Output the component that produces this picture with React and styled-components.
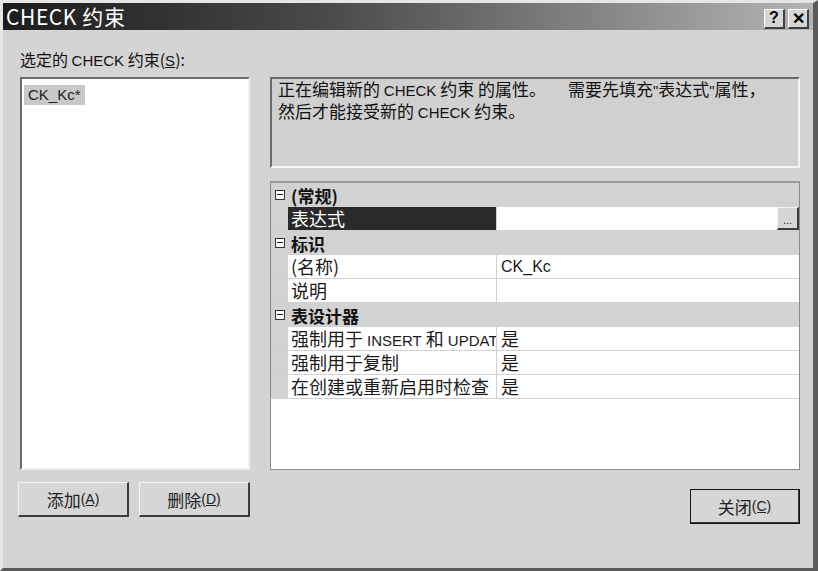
import React from "react";
import styled, { createGlobalStyle } from "styled-components";

const GlobalStyle = createGlobalStyle`
  html, body {
    margin: 0;
    padding: 0;
    background: #d4d4d4;
  }
  body {
    font-family: "Noto Sans CJK SC", "Liberation Sans", sans-serif;
  }
`;

// Outer dialog frame
const Dialog = styled.div`
  width: 818px;
  height: 571px;
  box-sizing: border-box;
  background: #d4d4d4;
  border-top: 3px solid #e6e6e6;
  border-left: 3px solid #e6e6e6;
  border-right: 5px solid #5a5a5a;
  border-bottom: 3px solid #5a5a5a;
  display: flex;
  flex-direction: column;
`;

const TitleBar = styled.div`
  height: 27px;
  background: linear-gradient(to right, #1c1c1c 0%, #4a4a4a 40%, #b4b4b4 100%);
  display: flex;
  align-items: center;
  justify-content: space-between;
  padding: 0 4px 0 3px;
`;

const Title = styled.div`
  color: #fff;
  font-size: 21px;
  line-height: 27px;
  letter-spacing: 0.6px;
`;

const CaptionButtons = styled.div`
  display: flex;
  gap: 3px;
  margin-top: 4px;
`;

const CaptionButton = styled.div`
  width: 21px;
  height: 20px;
  box-sizing: border-box;
  background: #d6d6d6;
  border-top: 1px solid #fff;
  border-left: 1px solid #fff;
  border-right: 2px solid #404040;
  border-bottom: 2px solid #404040;
  display: flex;
  align-items: center;
  justify-content: center;
  font-family: "Liberation Sans", sans-serif;
  font-weight: bold;
  font-size: 16px;
  color: #000;
`;

const Body = styled.div`
  flex: 1;
  padding: 18px 13px 0 17px;
  display: flex;
  flex-direction: column;
`;

const Label = styled.div`
  font-size: 16px;
  color: #111;
  height: 29px;
  line-height: 22px;
`;

const SmallCaps = styled.span`
  font-family: "Liberation Sans", sans-serif;
  font-size: ${p => p.size || 14}px;
`;

const Underline = styled.span`
  text-decoration: underline;
`;

const Columns = styled.div`
  display: flex;
  gap: 20px;
`;

const LeftCol = styled.div`
  width: 230px;
  display: flex;
  flex-direction: column;
`;

const RightCol = styled.div`
  flex: 1;
  display: flex;
  flex-direction: column;
`;

const ListBox = styled.div`
  height: 393px;
  box-sizing: border-box;
  background: #fff;
  border-top: 2px solid #6a6a6a;
  border-left: 2px solid #6a6a6a;
  border-right: 2px solid #f0f0f0;
  border-bottom: 2px solid #f0f0f0;
  padding: 2px 2px;
`;

const ListItem = styled.div`
  display: inline-block;
  background: ${p => (p.selected ? "#c8c8c8" : "transparent")};
  font-family: "Liberation Sans", sans-serif;
  font-size: 15px;
  color: #222;
  padding: 1px 4px 2px 4px;
`;

const ButtonRow = styled.div`
  display: flex;
  justify-content: space-between;
  margin-top: 12px;
  margin-left: -2px;
`;

const PushButton = styled.button`
  width: ${p => p.w || 111}px;
  height: 35px;
  box-sizing: border-box;
  background: #d6d6d6;
  border-top: 1px solid #f4f4f4;
  border-left: 1px solid #f4f4f4;
  border-right: 2px solid #3c3c3c;
  border-bottom: 2px solid #3c3c3c;
  outline: ${p => (p.isDefault ? "1px solid #111" : "none")};
  outline-offset: -1px;
  font-family: "Noto Sans CJK SC", "Liberation Sans", sans-serif;
  font-size: 17px;
  color: #222;
  padding: 0;
  display: flex;
  align-items: center;
  justify-content: center;
`;

const ShortcutKey = styled.span`
  font-family: "Liberation Sans", sans-serif;
  font-size: 14px;
  text-decoration: underline;
`;

const Description = styled.div`
  height: 91px;
  box-sizing: border-box;
  background: #d0d0d0;
  border-top: 2px solid #6a6a6a;
  border-left: 2px solid #6a6a6a;
  border-right: 2px solid #f4f4f4;
  border-bottom: 2px solid #f4f4f4;
  padding: 0 6px;
  font-size: 17px;
  line-height: 20px;
  color: #111;
`;

const Gap = styled.span`
  display: inline-block;
  width: ${p => p.w}px;
`;

const PropGrid = styled.div`
  margin-top: 13px;
  height: 289px;
  box-sizing: border-box;
  background: #fff;
  border: 1px solid #8a8a8a;
  border-top: 2px solid #9a9a9a;
  display: flex;
  flex-direction: column;
`;

const CategoryRow = styled.div`
  height: 24px;
  display: flex;
  align-items: center;
  background: #d2d2d2;
  font-weight: bold;
  font-size: 17px;
  color: #111;
`;

const Toggle = styled.div`
  width: 10px;
  height: 10px;
  box-sizing: border-box;
  border: 1px solid #333;
  margin: 0 6px 0 4px;
  position: relative;
  background: #fff;
  &::after {
    content: "";
    position: absolute;
    left: 1px;
    right: 1px;
    top: 3px;
    height: 1px;
    background: #222;
  }
`;

const PropRow = styled.div`
  height: 24px;
  display: flex;
  border-bottom: 1px solid #d0d0d0;
  box-sizing: border-box;
`;

const Gutter = styled.div`
  width: 17px;
  background: #d2d2d2;
  flex: none;
`;

const NameCell = styled.div`
  width: 209px;
  flex: none;
  box-sizing: border-box;
  padding-left: 3px;
  border-right: 1px solid #d0d0d0;
  background: ${p => (p.selected ? "#2a2a2a" : "#fff")};
  color: ${p => (p.selected ? "#fff" : "#1a1a1a")};
  font-size: 18px;
  line-height: 23px;
  white-space: nowrap;
  overflow: ${p => (p.clip ? "hidden" : "visible")};
`;

const ValueCell = styled.div`
  flex: 1;
  display: flex;
  justify-content: space-between;
  align-items: stretch;
  padding-left: 4px;
  font-size: ${p => (p.latin ? 16 : 18)}px;
  line-height: 23px;
  color: #1a1a1a;
  font-family: ${p => (p.latin ? `"Liberation Sans", sans-serif` : "inherit")};
`;

const EllipsisButton = styled.div`
  width: 22px;
  box-sizing: border-box;
  background: #d6d6d6;
  border-top: 1px solid #f4f4f4;
  border-left: 1px solid #f4f4f4;
  border-right: 2px solid #3c3c3c;
  border-bottom: 2px solid #3c3c3c;
  font-family: "Liberation Sans", sans-serif;
  font-size: 11px;
  line-height: 24px;
  text-align: center;
  color: #222;
`;

const RightFooter = styled.div`
  display: flex;
  justify-content: flex-end;
  margin-top: 19px;
`;

const properties = [
  { type: "cat", label: "(常规)" },
  { type: "prop", name: "表达式", value: "", selected: true, editor: true },
  { type: "cat", label: "标识" },
  { type: "prop", name: "(名称)", value: "CK_Kc", latin: true },
  { type: "prop", name: "说明", value: "" },
  { type: "cat", label: "表设计器" },
  {
    type: "prop",
    clip: true,
    name: (
      <>
        强制用于 <SmallCaps size={15}>INSERT</SmallCaps> 和 <SmallCaps size={15}>UPDATE</SmallCaps>
      </>
    ),
    value: "是",
  },
  { type: "prop", name: "强制用于复制", value: "是" },
  { type: "prop", name: "在创建或重新启用时检查", value: "是" },
];

export default function App() {
  return (
    <>
      <GlobalStyle />
      <Dialog>
        <TitleBar>
          <Title>CHECK 约束</Title>
          <CaptionButtons>
            <CaptionButton>?</CaptionButton>
            <CaptionButton>✕</CaptionButton>
          </CaptionButtons>
        </TitleBar>
        <Body>
          <Label>
            选定的 <SmallCaps size={15}>CHECK</SmallCaps> 约束(<Underline><SmallCaps size={15}>S</SmallCaps></Underline>):
          </Label>
          <Columns>
            <LeftCol>
              <ListBox>
                <ListItem selected>CK_Kc*</ListItem>
              </ListBox>
              <ButtonRow>
                <PushButton w={111}>
                  添加<ShortcutKey>(A)</ShortcutKey>
                </PushButton>
                <PushButton w={111}>
                  删除<ShortcutKey>(D)</ShortcutKey>
                </PushButton>
              </ButtonRow>
            </LeftCol>
            <RightCol>
              <Description>
                正在编辑新的 <SmallCaps size={15}>CHECK</SmallCaps> 约束 的属性。<Gap w={22} />需要先填充<SmallCaps size={15}>"</SmallCaps>表达式<SmallCaps size={15}>"</SmallCaps>属性，
                <br />
                然后才能接受新的 <SmallCaps size={15}>CHECK</SmallCaps> 约束。
              </Description>
              <PropGrid>
                {properties.map((p, i) =>
                  p.type === "cat" ? (
                    <CategoryRow key={i}>
                      <Toggle />
                      {p.label}
                    </CategoryRow>
                  ) : (
                    <PropRow key={i}>
                      <Gutter />
                      <NameCell selected={p.selected} clip={p.clip}>{p.name}</NameCell>
                      <ValueCell latin={p.latin}>
                        <span>{p.value}</span>
                        {p.editor && <EllipsisButton>...</EllipsisButton>}
                      </ValueCell>
                    </PropRow>
                  )
                )}
              </PropGrid>
              <RightFooter>
                <PushButton w={110} isDefault>
                  关闭<ShortcutKey>(C)</ShortcutKey>
                </PushButton>
              </RightFooter>
            </RightCol>
          </Columns>
        </Body>
      </Dialog>
    </>
  );
}
